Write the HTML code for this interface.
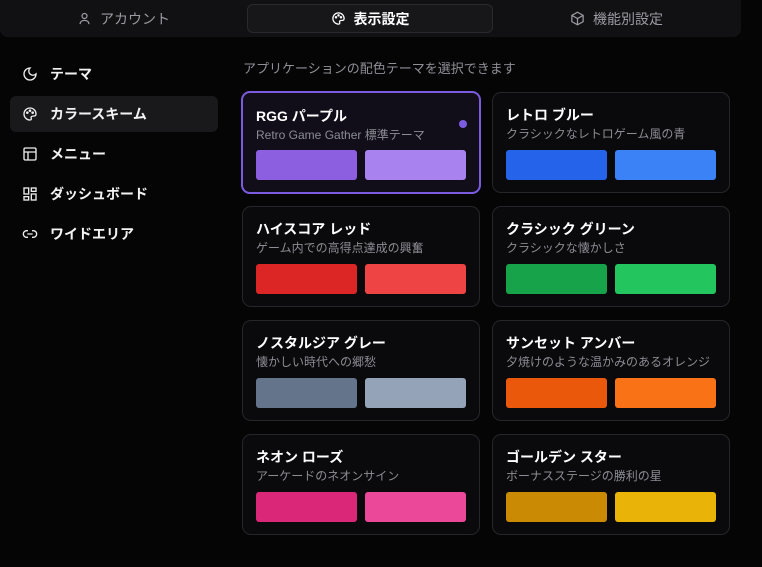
<!DOCTYPE html>
<html><head><meta charset="utf-8"><style>
*{box-sizing:border-box;margin:0;padding:0}
body{width:762px;height:567px;background:#050506;font-family:"Liberation Sans","Noto Sans CJK JP",sans-serif;color:#f2f2f3;position:relative;overflow:hidden}
.tabs{position:absolute;left:0;top:0;width:741px;height:37px;background:#111113;border-radius:0 0 8px 8px}
.tab{position:absolute;top:4px;height:29px;display:flex;align-items:center;justify-content:center;gap:8px;font-size:14px;color:#9a9aa2}
.tab.act{background:#17171a;border:1px solid #2a2a2e;border-radius:6px;color:#fff;font-weight:bold}
.side{position:absolute;left:10px;width:208px;height:36px;display:flex;align-items:center;gap:12px;padding-left:12px;font-size:14px;font-weight:bold;color:#f2f2f3}
.side.act{background:#19191c;border-radius:6px}
.desc{position:absolute;left:243px;top:58px;font-size:13px;color:#8f8f97}
.card{position:absolute;width:238px;height:101px;border:1px solid #26262a;border-radius:9px;background:#0a0a0c}
.card.sel{border:2px solid #7b5ce0;background:#110e1a}
.card h3{position:absolute;left:13px;top:12px;font-size:14px;font-weight:bold;color:#fff}
.card p{position:absolute;left:13px;top:32px;font-size:12px;color:#8c8c94}
.sw{position:absolute;top:57px;width:101px;height:30px;border-radius:3px}
.dot{position:absolute;right:12px;top:26px;width:8px;height:8px;border-radius:50%;background:#7b5ce0}
svg{display:block}
</style></head><body>
<div class="tabs">
<div class="tab" style="left:0;width:247px"><svg width="15" height="15" viewBox="0 0 24 24" fill="none" stroke="#9a9aa2" stroke-width="2"><circle cx="12" cy="8" r="4"/><path d="M5 21c0-4 3-6 7-6s7 2 7 6"/></svg>アカウント</div>
<div class="tab act" style="left:247px;width:246px"><svg width="15" height="15" viewBox="0 0 24 24" fill="none" stroke="#fff" stroke-width="2"><path d="M12 3a9 9 0 100 18c1.5 0 2-1 2-2 0-1.5-1-2 0-3s2-1 4-1c2 0 3-1 3-3 0-5-4-9-9-9z"/><circle cx="8" cy="10" r="1"/><circle cx="12" cy="7" r="1"/><circle cx="16" cy="10" r="1"/></svg>表示設定</div>
<div class="tab" style="left:493px;width:247px"><svg width="15" height="15" viewBox="0 0 24 24" fill="none" stroke="#9a9aa2" stroke-width="2"><path d="M12 2l9 5v10l-9 5-9-5V7z M3 7l9 5 9-5 M12 12v10"/></svg>機能別設定</div>
</div>
<div class="side" style="top:56px"><svg width="16" height="16" viewBox="0 0 24 24" fill="none" stroke="#eee" stroke-width="2"><path d="M12 3a6 6 0 009 9 9 9 0 11-9-9z"/></svg>テーマ</div>
<div class="side act" style="top:96px"><svg width="16" height="16" viewBox="0 0 24 24" fill="none" stroke="#eee" stroke-width="2"><path d="M12 3a9 9 0 100 18c1.5 0 2-1 2-2 0-1.5-1-2 0-3s2-1 4-1c2 0 3-1 3-3 0-5-4-9-9-9z"/><circle cx="8" cy="10" r="1"/><circle cx="12" cy="7" r="1"/><circle cx="16" cy="10" r="1"/></svg>カラースキーム</div>
<div class="side" style="top:136px"><svg width="16" height="16" viewBox="0 0 24 24" fill="none" stroke="#eee" stroke-width="2"><rect x="3" y="3" width="18" height="18" rx="2"/><path d="M3 9h18M9 9v12"/></svg>メニュー</div>
<div class="side" style="top:176px"><svg width="16" height="16" viewBox="0 0 24 24" fill="none" stroke="#eee" stroke-width="2"><rect x="3" y="3" width="7" height="9"/><rect x="14" y="3" width="7" height="5"/><rect x="14" y="12" width="7" height="9"/><rect x="3" y="16" width="7" height="5"/></svg>ダッシュボード</div>
<div class="side" style="top:216px"><svg width="16" height="16" viewBox="0 0 24 24" fill="none" stroke="#eee" stroke-width="2"><path d="M9 17H7A5 5 0 017 7h2M15 7h2a5 5 0 010 10h-2M8 12h8"/></svg>ワイドエリア</div>
<div class="desc">アプリケーションの配色テーマを選択できます</div>

<div class="card sel" style="left:241px;top:91px;width:240px;height:103px"><h3 style="left:13px;top:13px">RGG パープル</h3><p style="top:33px">Retro Game Gather 標準テーマ</p><div class="dot" style="top:27px"></div><div class="sw" style="left:13px;top:57px;background:#8b5fe0"></div><div class="sw" style="left:122px;top:57px;background:#a882ef"></div></div>
<div class="card" style="left:492px;top:92px"><h3>レトロ ブルー</h3><p>クラシックなレトロゲーム風の青</p><div class="sw" style="left:13px;background:#2563eb"></div><div class="sw" style="left:122px;background:#3b82f6"></div></div>

<div class="card" style="left:242px;top:206px"><h3>ハイスコア レッド</h3><p>ゲーム内での高得点達成の興奮</p><div class="sw" style="left:13px;background:#dc2626"></div><div class="sw" style="left:122px;background:#ef4444"></div></div>
<div class="card" style="left:492px;top:206px"><h3>クラシック グリーン</h3><p>クラシックな懐かしさ</p><div class="sw" style="left:13px;background:#16a34a"></div><div class="sw" style="left:122px;background:#22c55e"></div></div>

<div class="card" style="left:242px;top:320px"><h3>ノスタルジア グレー</h3><p>懐かしい時代への郷愁</p><div class="sw" style="left:13px;background:#64748b"></div><div class="sw" style="left:122px;background:#94a3b8"></div></div>
<div class="card" style="left:492px;top:320px"><h3>サンセット アンバー</h3><p>夕焼けのような温かみのあるオレンジ</p><div class="sw" style="left:13px;background:#ea580c"></div><div class="sw" style="left:122px;background:#f97316"></div></div>

<div class="card" style="left:242px;top:434px"><h3>ネオン ローズ</h3><p>アーケードのネオンサイン</p><div class="sw" style="left:13px;background:#db2777"></div><div class="sw" style="left:122px;background:#ec4899"></div></div>
<div class="card" style="left:492px;top:434px"><h3>ゴールデン スター</h3><p>ボーナスステージの勝利の星</p><div class="sw" style="left:13px;background:#ca8a04"></div><div class="sw" style="left:122px;background:#eab308"></div></div>
</body></html>
